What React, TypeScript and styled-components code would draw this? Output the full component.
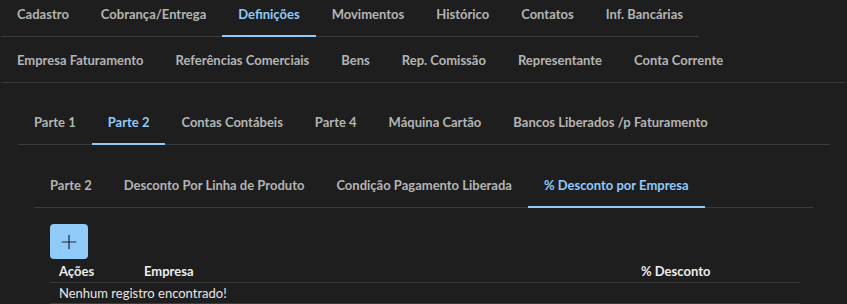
import React, { useState } from 'react'
import styled, { createGlobalStyle } from 'styled-components'

const GlobalStyle = createGlobalStyle`
  html, body {
    margin: 0;
    padding: 0;
    background: #1e1e1e;
    overflow: hidden;
  }
  body {
    font-family: Lato, "Liberation Sans", sans-serif;
    color: #e6e6e6;
  }
`

const Page = styled.div`
  width: 844px;
  margin-top: -9px;
  padding-left: 1px;
`

const TabBar = styled.div<{ $fit?: boolean }>`
  display: ${(p) => (p.$fit ? 'inline-flex' : 'flex')};
  border-bottom: 1px solid #3b3b3b;
`

const Tab = styled.button<{ $active?: boolean }>`
  position: relative;
  height: 46px;
  padding: 0 16px;
  margin-bottom: -1px;
  background: none;
  border: none;
  font-family: inherit;
  font-size: 13px;
  font-weight: 700;
  white-space: nowrap;
  color: ${(p) => (p.$active ? '#90caf9' : '#b4b4b4')};
  cursor: pointer;

  &::after {
    content: '';
    position: absolute;
    left: 0;
    right: 0;
    bottom: 0;
    height: 2px;
    background: ${(p) => (p.$active ? '#90caf9' : 'transparent')};
  }
`

const Panel = styled.div<{ $pad: string }>`
  padding: ${(p) => p.$pad};
`

const Tabs = ({ items, active, fit }: { items: string[]; active: string; fit?: boolean }) => {
  const [current, setCurrent] = useState(active)
  return (
    <TabBar $fit={fit}>
      {items.map((t) => (
        <Tab key={t} $active={t === current} onClick={() => setCurrent(t)}>
          {t}
        </Tab>
      ))}
    </TabBar>
  )
}

const AddButton = styled.button`
  width: 38px;
  height: 35px;
  border: none;
  border-radius: 4px;
  background: #90caf9;
  display: flex;
  align-items: center;
  justify-content: center;
  padding: 0;
  cursor: pointer;
`

const Table = styled.div`
  display: flex;
  flex-direction: column;
`

const HeadRow = styled.div`
  display: grid;
  grid-template-columns: 85px 497px 1fr;
  height: 23px;
  align-items: center;
  padding-left: 9px;
  border-bottom: 1px solid #3b3b3b;
  font-size: 13px;
  font-weight: 700;
  color: #ececec;
`

const EmptyRow = styled.div`
  height: 20px;
  display: flex;
  align-items: center;
  padding-left: 9px;
  border-bottom: 1px solid #3b3b3b;
  font-size: 13px;
  color: #e6e6e6;
`

export default function App() {
  return (
    <Page>
      <GlobalStyle />
      <Tabs
        fit
        active="Definições"
        items={['Cadastro', 'Cobrança/Entrega', 'Definições', 'Movimentos', 'Histórico', 'Contatos', 'Inf. Bancárias']}
      />
      <Tabs
        active=""
        items={['Empresa Faturamento', 'Referências Comerciais', 'Bens', 'Rep. Comissão', 'Representante', 'Conta Corrente']}
      />
      <Panel $pad="16px 15px 0 17px">
        <Tabs
          active="Parte 2"
          items={['Parte 1', 'Parte 2', 'Contas Contábeis', 'Parte 4', 'Máquina Cartão', 'Bancos Liberados /p Faturamento']}
        />
        <Panel $pad="17px 17px 0 16px">
          <Tabs
            active="% Desconto por Empresa"
            items={['Parte 2', 'Desconto Por Linha de Produto', 'Condição Pagamento Liberada', '% Desconto por Empresa']}
          />
          <Panel $pad="16px 13px 0 16px">
            <AddButton aria-label="Adicionar">
              <svg width="18" height="18" viewBox="0 0 24 24" fill="none" stroke="#1d2833" strokeWidth="1.6" strokeLinecap="round">
                <path d="M12 3v18M3 12h18" />
              </svg>
            </AddButton>
            <Table>
              <HeadRow>
                <span>Ações</span>
                <span>Empresa</span>
                <span>% Desconto</span>
              </HeadRow>
              <EmptyRow>Nenhum registro encontrado!</EmptyRow>
            </Table>
          </Panel>
        </Panel>
      </Panel>
    </Page>
  )
}
